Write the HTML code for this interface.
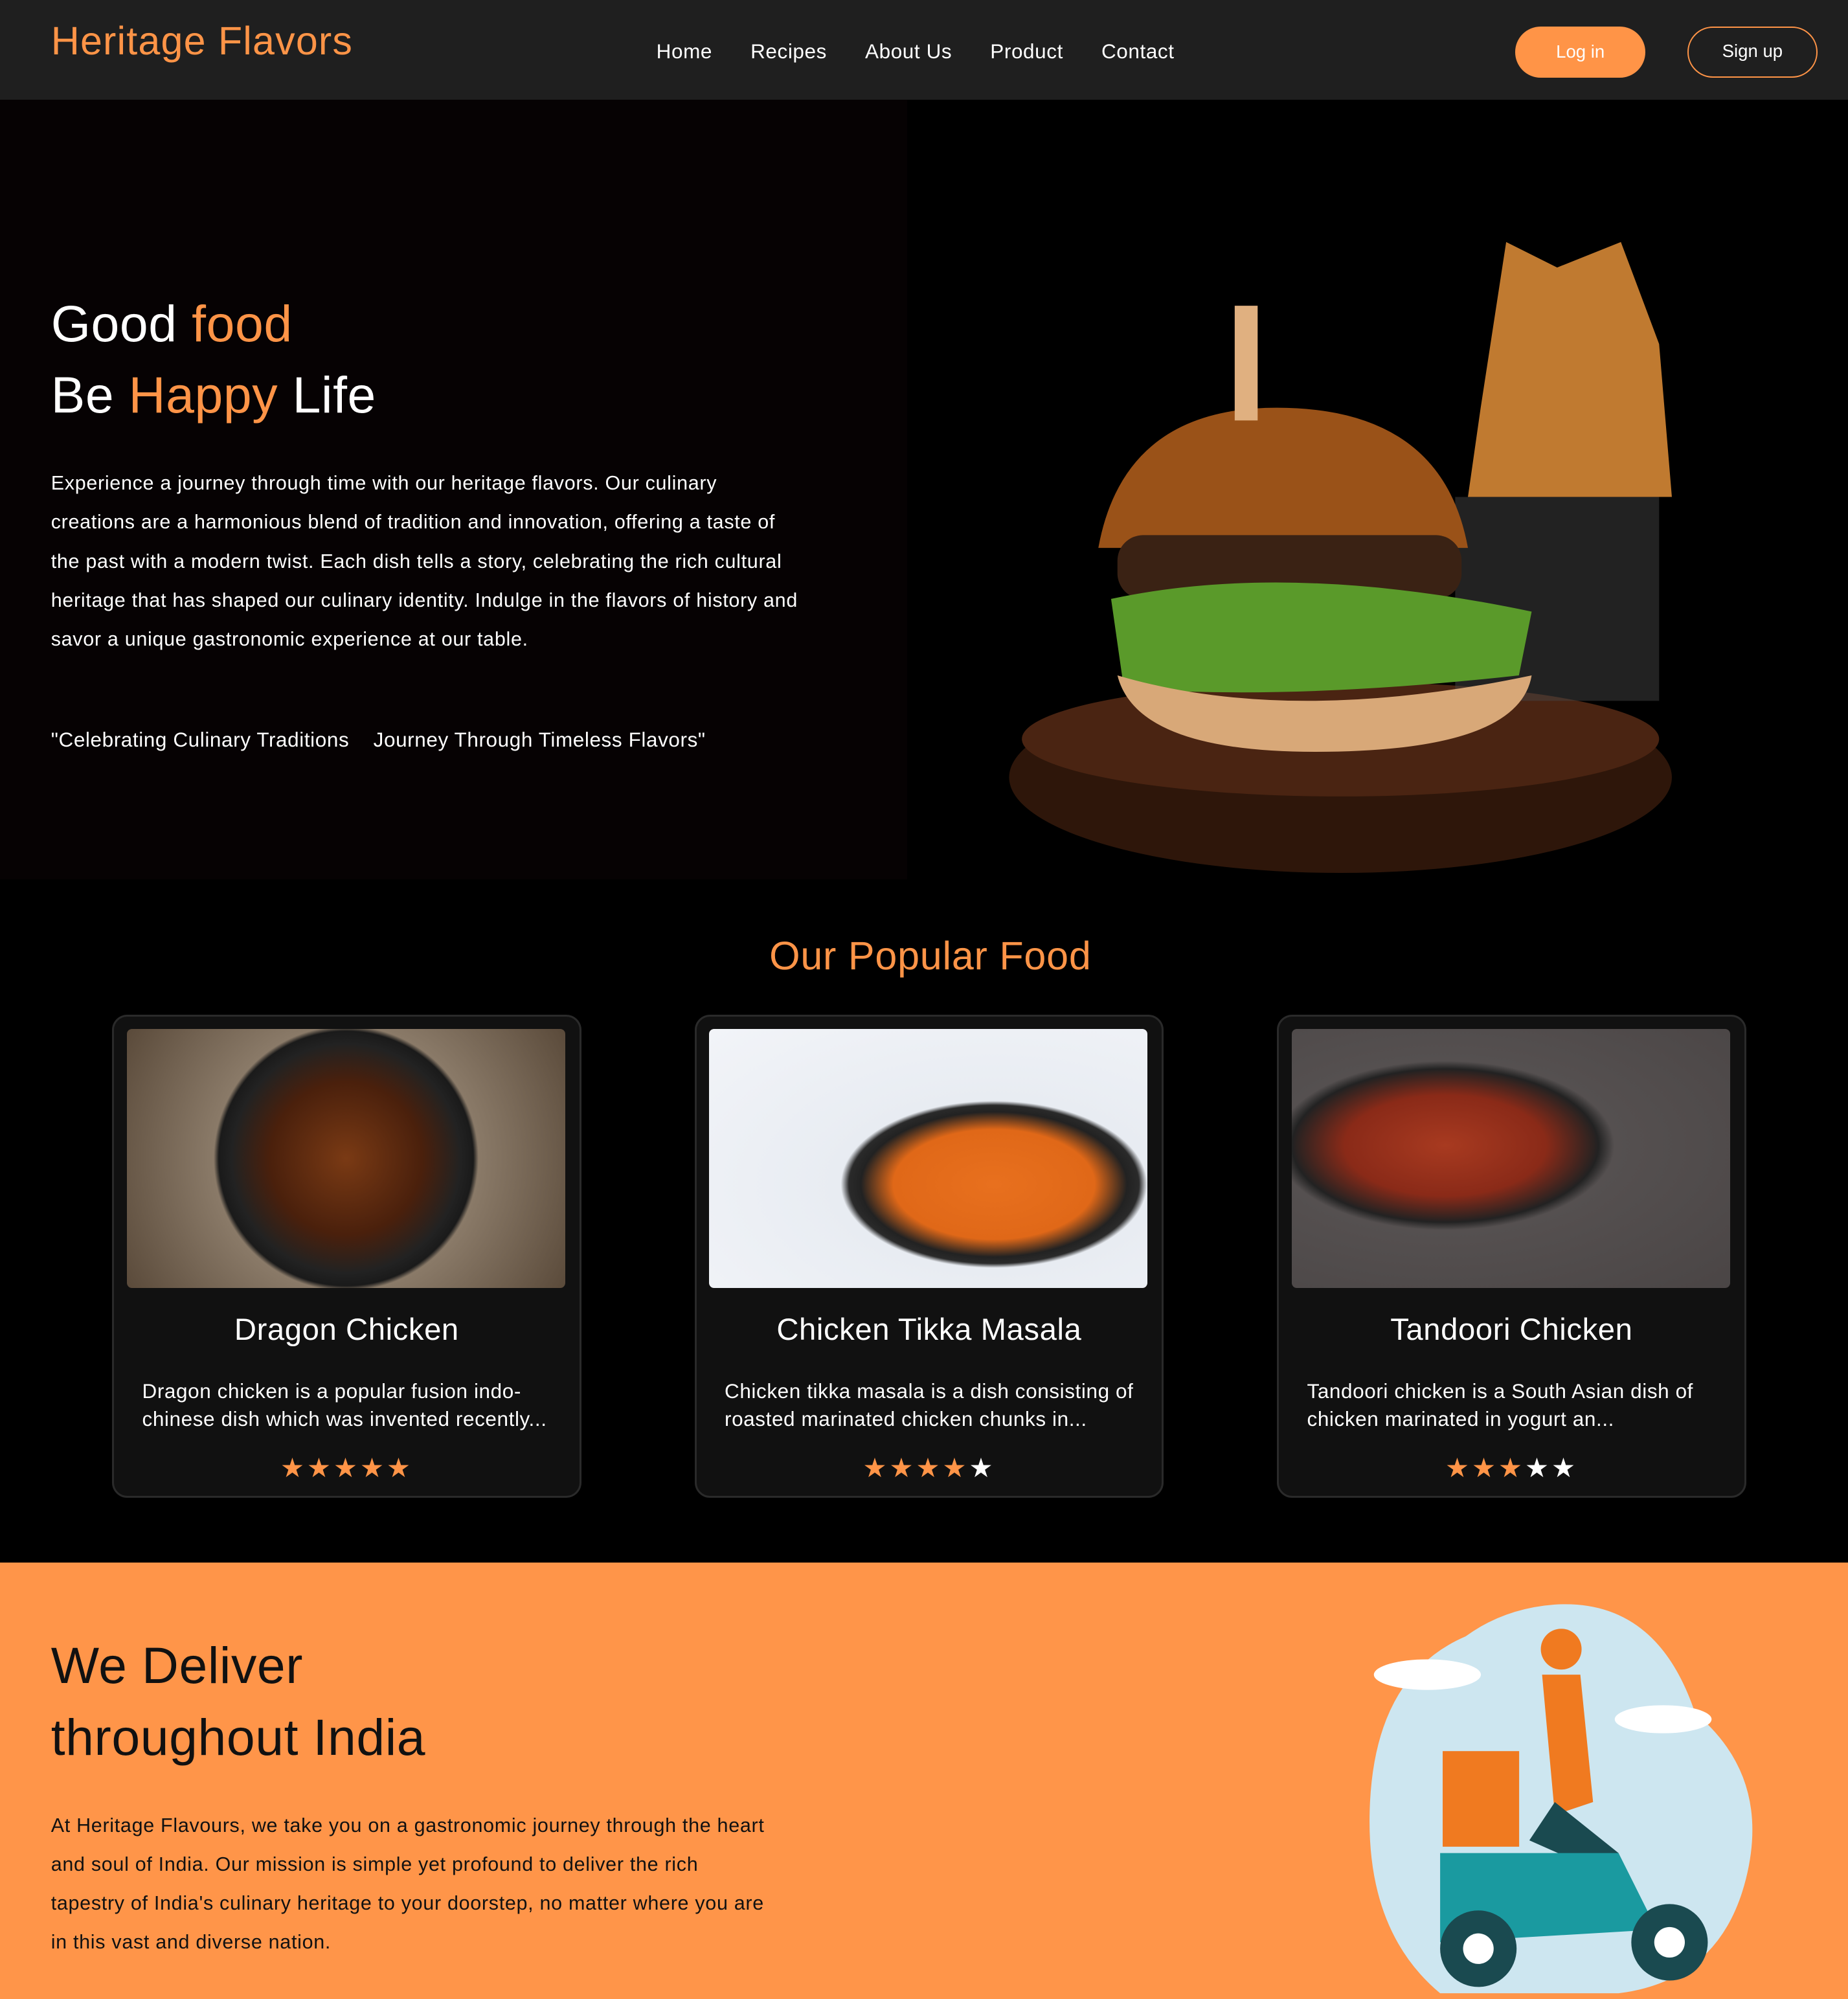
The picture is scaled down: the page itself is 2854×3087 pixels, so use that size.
<!DOCTYPE html>
<html><head><meta charset="utf-8"><style>
*{margin:0;padding:0;box-sizing:border-box}
html,body{width:2854px;height:3087px;overflow:hidden;background:#000}
#w{zoom:1.96828;width:1450px;height:1569px;position:relative;font-family:"Liberation Sans",sans-serif;color:#fff;background:#000}
.hdr{position:absolute;left:0;top:0;width:1450px;height:78px;background:#1f1f1f}
.logo{position:absolute;left:40px;top:14px;font-size:31px;color:#ff9447;letter-spacing:.6px}
.nav{position:absolute;left:515px;top:31px;font-size:16px;letter-spacing:.3px}
.nav span{margin-right:30px}
.btn{position:absolute;top:21px;height:40px;border-radius:20px;font-size:14px;text-align:center;line-height:40px}
.hero{position:absolute;left:0;top:78px;width:712px;height:612px;background:#060203}
.h1{position:absolute;left:40px;top:226px;font-size:40px;line-height:56px;letter-spacing:.3px}
.o{color:#ff9447}
.p{position:absolute;left:40px;top:364px;font-size:15.5px;line-height:30.5px;letter-spacing:.35px;white-space:nowrap}
.card{position:absolute;top:796px;width:368px;height:379px;background:#111;border:2px solid #2a2a2a;border-radius:12px}
.img{position:absolute;left:10px;top:10px;width:344px;height:203px;border-radius:4px;overflow:hidden}
.ct{position:absolute;top:232px;width:100%;text-align:center;font-size:24px;letter-spacing:.3px}
.cd{position:absolute;left:22px;top:283px;width:335px;font-size:16px;line-height:22px;letter-spacing:.3px}
.st{position:absolute;top:342px;width:100%;text-align:center;font-size:21px;letter-spacing:2px;color:#ff9447}
.del{position:absolute;left:0;top:1226px;width:1450px;height:343px;background:#ff9549;color:#111}
</style></head><body><div id="w">
<div class="hdr">
<div class="logo">Heritage Flavors</div>
<div class="nav"><span>Home</span><span>Recipes</span><span>About Us</span><span>Product</span><span>Contact</span></div>
<div class="btn" style="left:1189px;width:102px;background:#ff9447">Log in</div>
<div class="btn" style="left:1324px;width:102px;border:1.5px solid #ff9447;line-height:37px">Sign up</div>
</div>
<div class="hero"></div>
<div class="h1">Good <span class="o">food</span><br>Be <span class="o">Happy</span> Life</div>
<div class="p">Experience a journey through time with our heritage flavors. Our culinary<br>creations are a harmonious blend of tradition and innovation, offering a taste of<br>the past with a modern twist. Each dish tells a story, celebrating the rich cultural<br>heritage that has shaped our culinary identity. Indulge in the flavors of history and<br>savor a unique gastronomic experience at our table.</div>
<div style="position:absolute;left:40px;top:571px;font-size:16px;letter-spacing:.3px">"Celebrating Culinary Traditions &nbsp;&nbsp;&nbsp;Journey Through Timeless Flavors"</div>
<svg style="position:absolute;left:712px;top:150px" width="680" height="545">
<ellipse cx="340" cy="460" rx="260" ry="75" fill="#2e160a"/>
<ellipse cx="340" cy="430" rx="250" ry="45" fill="#4a2412"/>
<rect x="430" y="240" width="160" height="160" fill="#444" opacity=".5"/>
<path d="M450 170 L470 40 L510 60 L560 40 L590 120 L600 240 L440 240Z" fill="#c07a30"/>
<path d="M150 280 Q170 170 290 170 Q420 170 440 280Z" fill="#9a5218"/>
<rect x="165" y="270" width="270" height="50" rx="20" fill="#3a2214"/>
<path d="M160 320 Q300 290 490 330 L480 380 Q300 400 170 390Z" fill="#5a9a2a"/>
<path d="M165 380 Q300 420 490 380 Q480 440 320 440 Q180 440 165 380Z" fill="#d8a878"/>
<rect x="257" y="90" width="18" height="90" fill="#e0b080"/>
</svg>
<div style="position:absolute;left:0;top:732px;width:1460px;text-align:center;font-size:31px;color:#ff9447;letter-spacing:.4px">Our Popular Food</div>

<div class="card" style="left:88px"><div class="img" style="background:radial-gradient(circle at 50% 50%,#7a3a14 0,#4a200c 30%,#222 45%,#1a1a1a 50%,#8a7a68 52%,#5a4a3a 100%)"></div><div class="ct">Dragon Chicken</div><div class="cd">Dragon chicken is a popular fusion indo-chinese dish which was invented recently...</div><div class="st">★★★★★</div></div>
<div class="card" style="left:545px"><div class="img" style="background:radial-gradient(ellipse at 65% 60%,#e8701e 0,#e06818 25%,#222 33%,#2a2a2a 36%,#e8ecf2 38%,#f2f4f8 100%)"></div><div class="ct">Chicken Tikka Masala</div><div class="cd">Chicken tikka masala is a dish consisting of roasted marinated chicken chunks in...</div><div class="st">★★★★<span style="color:#fff">★</span></div></div>
<div class="card" style="left:1002px"><div class="img" style="background:radial-gradient(ellipse at 35% 45%,#a83a20 0,#8a2a18 25%,#222 38%,#555050 42%,#4a4545 100%)"></div><div class="ct">Tandoori Chicken</div><div class="cd">Tandoori chicken is a South Asian dish of chicken marinated in yogurt an...</div><div class="st">★★★<span style="color:#fff">★★</span></div></div>

<div class="del">
<div style="position:absolute;left:40px;top:53px;font-size:40px;line-height:56px;letter-spacing:.3px">We Deliver<br>throughout India</div>
<div style="position:absolute;left:40px;top:191px;font-size:15.5px;line-height:30.5px;letter-spacing:.35px;white-space:nowrap">At Heritage Flavours, we take you on a gastronomic journey through the heart<br>and soul of India. Our mission is simple yet profound to deliver the rich<br>tapestry of India's culinary heritage to your doorstep, no matter where you are<br>in this vast and diverse nation.</div>
<svg style="position:absolute;left:1070px;top:28px" width="320" height="315">
<path d="M150 5 Q230 0 260 90 Q320 140 300 220 Q280 300 200 310 L60 310 Q0 260 5 160 Q10 60 80 30 Q110 8 150 5Z" fill="#cde6f0"/>
<rect x="62" y="120" width="60" height="75" fill="#f07a20"/>
<path d="M140 60 L170 60 L180 160 L150 170Z" fill="#f07a20"/>
<path d="M150 160 L200 200 L190 260 L170 260 L175 210 L130 190Z" fill="#1a4a50"/>
<path d="M60 200 L200 200 L230 260 L60 270Z" fill="#1a9aa0"/>
<circle cx="90" cy="275" r="30" fill="#1a4a50"/><circle cx="90" cy="275" r="12" fill="#fff"/>
<circle cx="240" cy="270" r="30" fill="#1a4a50"/><circle cx="240" cy="270" r="12" fill="#fff"/>
<circle cx="155" cy="40" r="16" fill="#f07a20"/>
<ellipse cx="50" cy="60" rx="42" ry="12" fill="#fff"/><ellipse cx="235" cy="95" rx="38" ry="11" fill="#fff"/>
</svg>
</div>
</div></body></html>
